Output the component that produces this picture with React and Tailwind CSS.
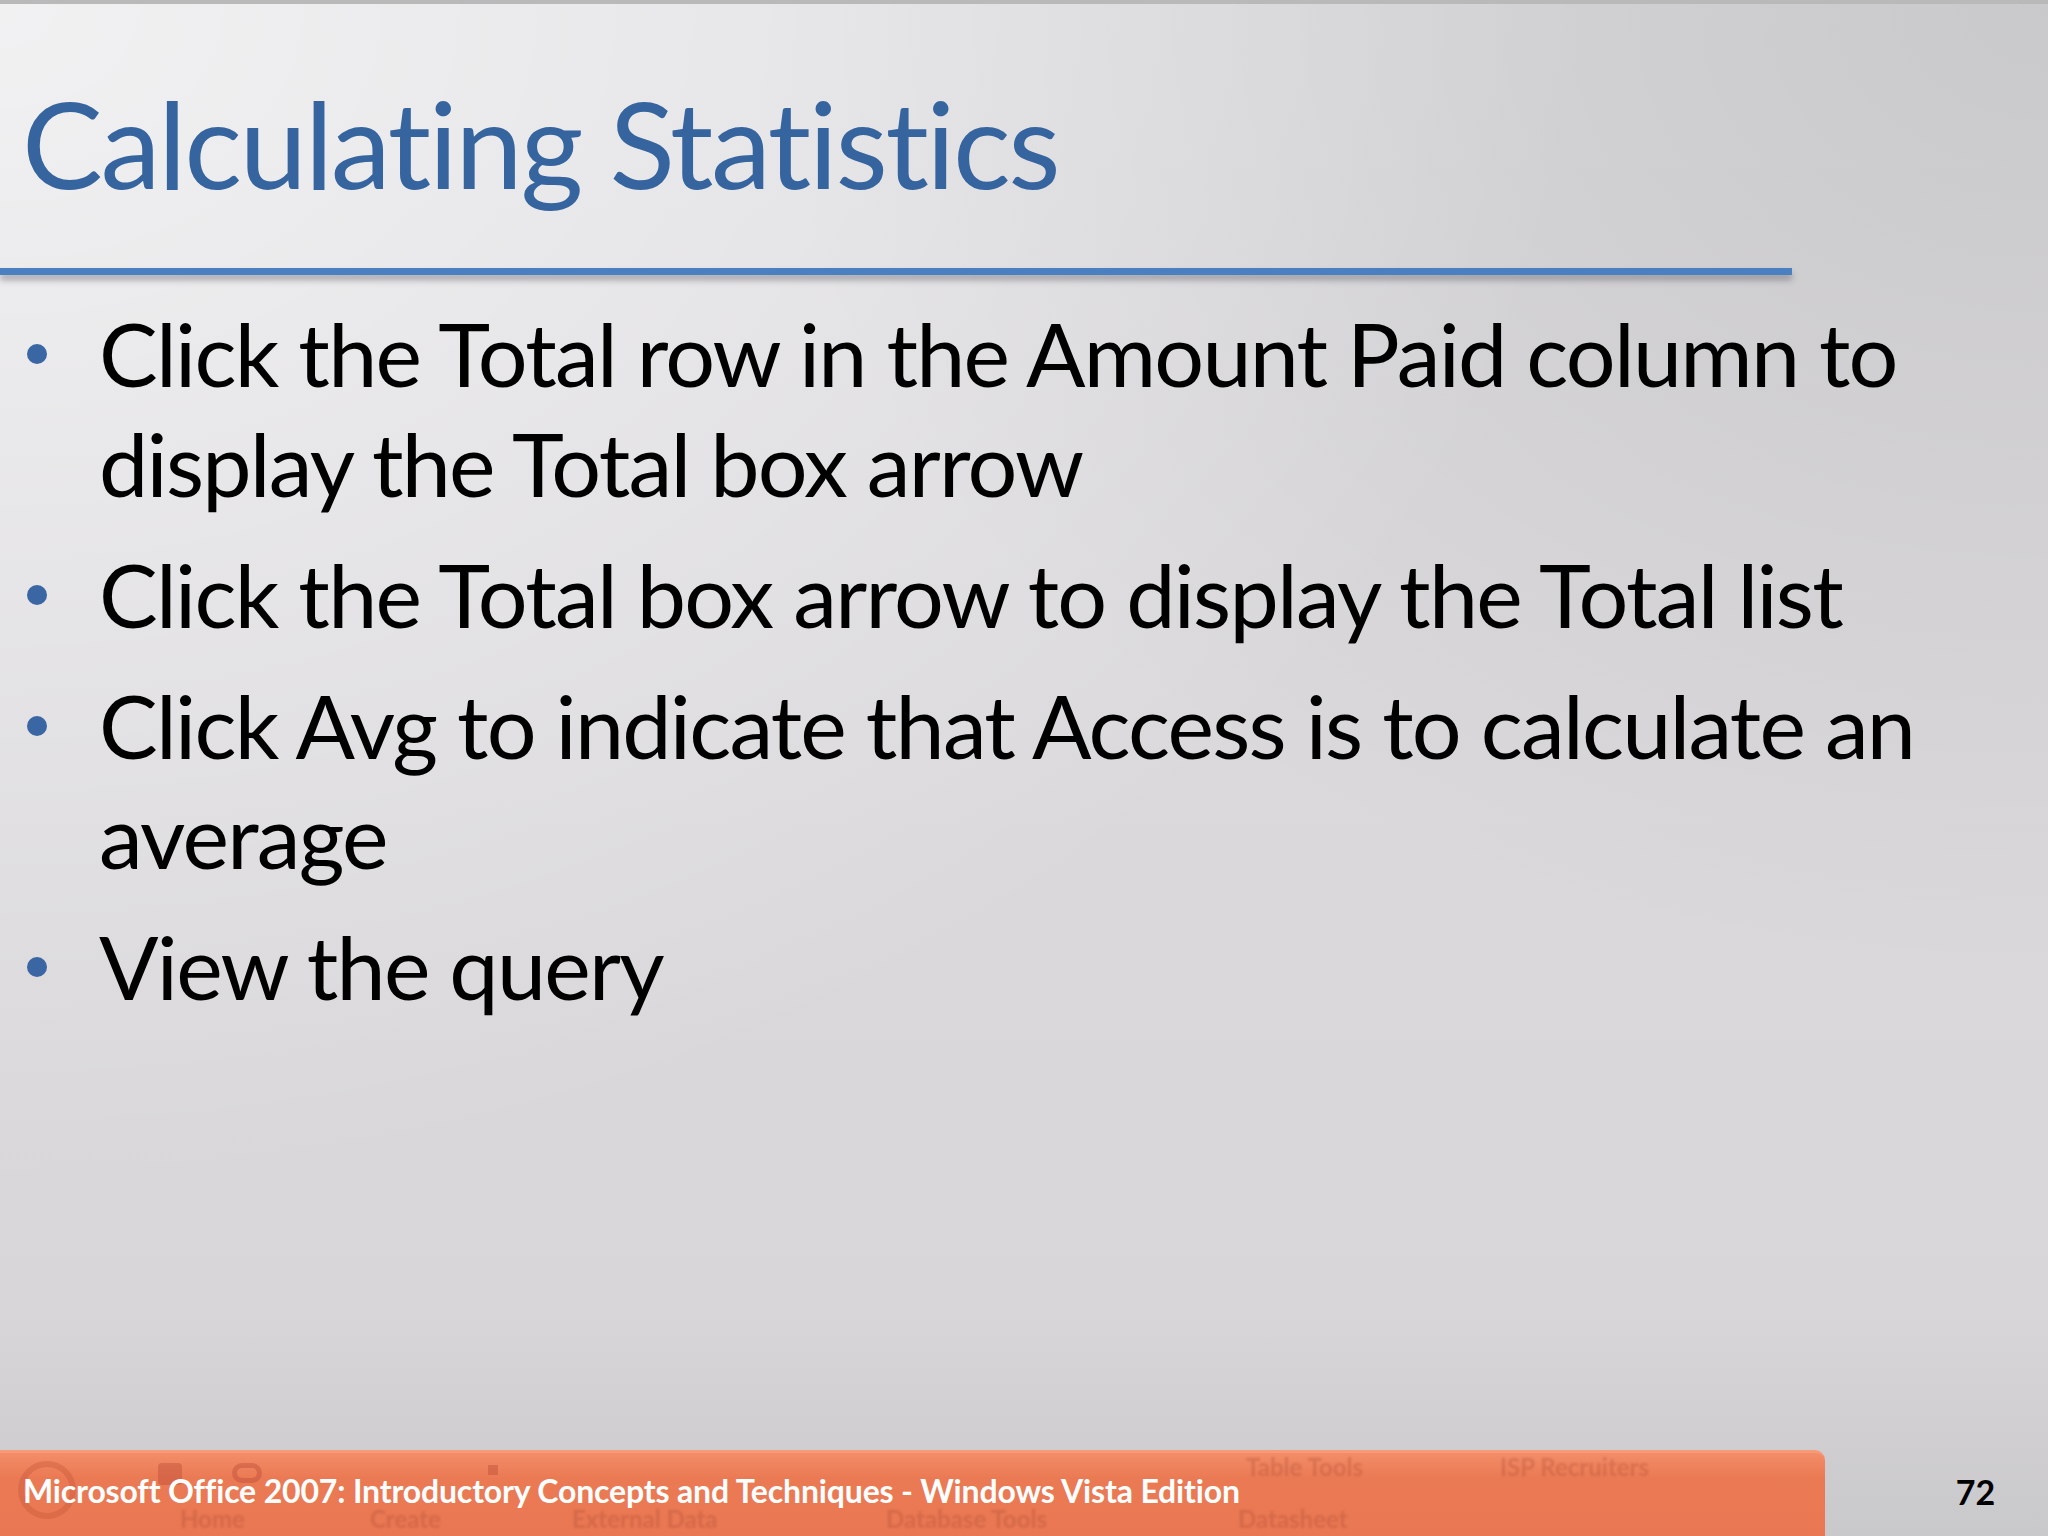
import React from 'react';

const BULLETS = [
  ['Click the Total row in the Amount Paid column to', 'display the Total box arrow'],
  ['Click the Total box arrow to display the Total list'],
  ['Click Avg to indicate that Access is to calculate an', 'average'],
  ['View the query'],
];

// faint ribbon labels showing through the footer bar
const GHOST = [
  { label: 'Table Tools', cls: 'left-[1246px] top-[2px]' },
  { label: 'ISP Recruiters', cls: 'left-[1500px] top-[2px]' },
  { label: 'Home', cls: 'left-[180px] top-[54px]' },
  { label: 'Create', cls: 'left-[370px] top-[54px]' },
  { label: 'External Data', cls: 'left-[572px] top-[54px]' },
  { label: 'Database Tools', cls: 'left-[886px] top-[54px]' },
  { label: 'Datasheet', cls: 'left-[1238px] top-[54px]' },
];

export default function App() {
  return (
    <div
      className="w-[2048px] h-[1536px] overflow-hidden flex flex-col border-t-[4px] border-[#b9b9ba] bg-[radial-gradient(ellipse_at_0%_0%,rgba(255,255,255,0.6),rgba(255,255,255,0)_55%),radial-gradient(ellipse_at_100%_0%,rgba(0,0,0,0.09),rgba(0,0,0,0)_45%),linear-gradient(180deg,#dddcdf_0%,#d8d6d9_85%,#c9c8ca_100%)]"
      style={{ fontFamily: 'Lato, "Open Sans", sans-serif' }}
    >
      {/* title */}
      <div className="pl-[22px] pt-[78px]">
        <h1 className="text-[121px] leading-none h-[121px] text-[#35649e] tracking-[-0.02em] whitespace-nowrap">
          Calculating Statistics
        </h1>
      </div>
      <div className="mt-[65px] w-[1792px] h-[7px] bg-[#4a7fc1] shadow-[0_5px_6px_rgba(80,80,90,0.45)]" />

      {/* body */}
      <ul className="mt-[23px] flex flex-col gap-[21px]">
        {BULLETS.map((lines, i) => (
          <li key={i} className="flex items-start">
            <div className="w-[99px] shrink-0 pl-[27px] pt-[46px]">
              <div className="w-[20px] h-[20px] rounded-full bg-[#3a66a3]" />
            </div>
            <div className="text-[88px] leading-[110px] text-black tracking-[-0.02em]">
              {lines.map((l) => (
                <div key={l} className="whitespace-nowrap">
                  {l}
                </div>
              ))}
            </div>
          </li>
        ))}
      </ul>

      <div className="flex-1" />

      {/* footer */}
      <div className="flex items-end h-[86px]">
        <div className="relative w-[1825px] h-[86px] rounded-tr-[10px] overflow-hidden border-t-[3px] border-[#f79a77] bg-[linear-gradient(180deg,#f38d68_0%,#ea7a54_30%,#e97753_100%)]">
          <div className="absolute inset-0 text-[#b9543a] opacity-40 font-bold">
            <div className="absolute left-[18px] top-[8px] w-[58px] h-[58px] rounded-full border-[6px] border-[#c9593b]" />
            <div className="absolute left-[158px] top-[10px] w-[24px] h-[22px] bg-[#b84a36] rounded-sm" />
            <div className="absolute left-[232px] top-[10px] w-[30px] h-[20px] border-[5px] border-[#b84a36] rounded-full" />
            <div className="absolute left-[488px] top-[12px] w-[10px] h-[10px] bg-[#b84a36]" />
            {GHOST.map((g) => (
              <span key={g.label} className={`absolute ${g.cls} text-[24px] leading-none blur-[1px]`}>
                {g.label}
              </span>
            ))}
          </div>
          <div className="relative pl-[23px] pt-[22px] text-[32px] leading-none font-bold text-white whitespace-nowrap tracking-[-0.005em]">
            Microsoft Office 2007: Introductory Concepts and Techniques - Windows Vista Edition
          </div>
        </div>
        <div className="flex-1 h-full flex items-center justify-center pl-[78px] pb-[4px]">
          <span className="text-[34px] font-bold text-black">72</span>
        </div>
      </div>
    </div>
  );
}
